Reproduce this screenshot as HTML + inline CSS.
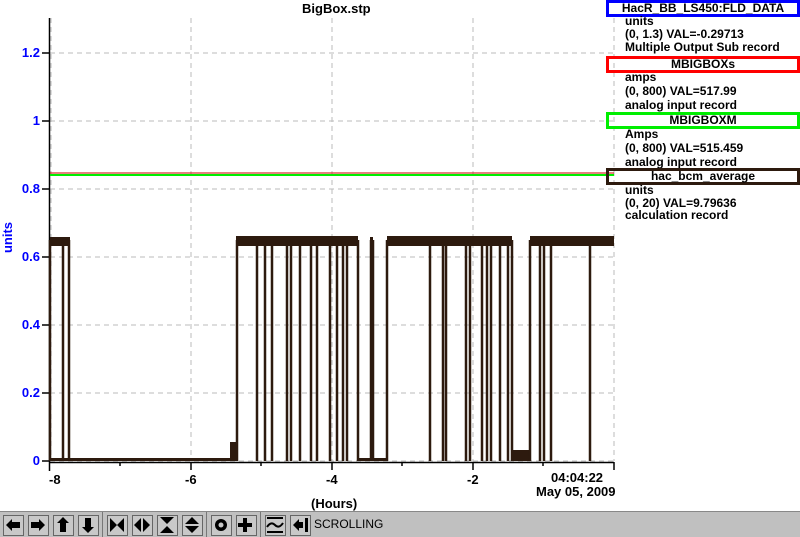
<!DOCTYPE html>
<html><head><meta charset="utf-8"><style>
body{margin:0;width:800px;height:536px;background:#fff;overflow:hidden;position:relative;font-family:"Liberation Sans",sans-serif;font-weight:bold;font-size:13px;color:#000}
.t{position:absolute;white-space:nowrap}
.yl{position:absolute;right:760px;color:#00f;font-size:13px;white-space:nowrap}
.lg{position:absolute;left:606px;width:188px;height:11px;border:3px solid;text-align:center;font-size:12px;line-height:11px}
.li{position:absolute;left:625px;font-size:12px;line-height:14px;white-space:nowrap}
.tb{position:absolute;left:0;top:511px;width:800px;height:25px;background:#c0c0c0;border-top:1px solid #888}
.b{position:absolute;top:3px;width:19px;height:19px;border:1px solid #666;background:#c8c8c8}
.sep{position:absolute;top:0;width:1px;height:25px;background:#777}
</style></head><body>
<svg width="800" height="536" style="position:absolute;left:0;top:0">
<g stroke="#bbb" stroke-width="1" stroke-dasharray="5,4">
<line x1="50" y1="53" x2="614" y2="53"/><line x1="50" y1="121" x2="614" y2="121"/><line x1="50" y1="189" x2="614" y2="189"/><line x1="50" y1="257" x2="614" y2="257"/><line x1="50" y1="325" x2="614" y2="325"/><line x1="50" y1="393" x2="614" y2="393"/><line x1="50" y1="461" x2="614" y2="461"/>
<line x1="191" y1="18" x2="191" y2="461"/><line x1="332" y1="18" x2="332" y2="461"/><line x1="473" y1="18" x2="473" y2="461"/><line x1="614" y1="18" x2="614" y2="461"/><line x1="51" y1="18" x2="51" y2="461"/>
</g>
<g stroke="#000" stroke-width="1.5">
<line x1="49.5" y1="18" x2="49.5" y2="471"/><line x1="49" y1="462.5" x2="614" y2="462.5"/>
<line x1="42" y1="53" x2="49" y2="53"/><line x1="42" y1="121" x2="49" y2="121"/><line x1="42" y1="189" x2="49" y2="189"/><line x1="42" y1="257" x2="49" y2="257"/><line x1="42" y1="325" x2="49" y2="325"/><line x1="42" y1="393" x2="49" y2="393"/><line x1="42" y1="461" x2="49" y2="461"/>
<line x1="191" y1="462" x2="191" y2="470"/><line x1="332" y1="462" x2="332" y2="470"/><line x1="473" y1="462" x2="473" y2="470"/><line x1="614" y1="462" x2="614" y2="470"/>
<line x1="120" y1="462" x2="120" y2="466"/><line x1="261" y1="462" x2="261" y2="466"/><line x1="402" y1="462" x2="402" y2="466"/><line x1="543" y1="462" x2="543" y2="466"/>
</g>
<line x1="50" y1="173" x2="614" y2="173" stroke="#c00" stroke-width="1"/>
<line x1="50" y1="175" x2="614" y2="175" stroke="#0e0" stroke-width="2"/>
<g fill="#2d1a0e">
<rect x="50" y="237" width="20" height="9"/>
<rect x="236" y="236" width="122" height="10"/>
<rect x="370" y="237" width="3" height="9"/>
<rect x="387" y="236" width="125" height="10"/>
<rect x="530" y="236" width="84" height="10"/>
<rect x="50" y="458" width="186" height="3"/>
<rect x="358" y="458" width="14" height="3"/>
<rect x="372" y="458" width="16" height="3"/>
<rect x="512" y="450" width="18" height="11"/>
<rect x="230" y="442" width="6" height="19"/>
</g>
<g stroke="#2d1a0e" stroke-width="2.5">
<line x1="50" y1="240" x2="50" y2="461"/><line x1="63" y1="240" x2="63" y2="461"/><line x1="69" y1="240" x2="69" y2="461"/><line x1="237" y1="240" x2="237" y2="461"/>
<line x1="257" y1="240" x2="257" y2="461"/><line x1="265" y1="240" x2="265" y2="461"/><line x1="272" y1="240" x2="272" y2="461"/><line x1="287" y1="240" x2="287" y2="461"/><line x1="291" y1="240" x2="291" y2="461"/><line x1="300" y1="240" x2="300" y2="461"/><line x1="311" y1="240" x2="311" y2="461"/><line x1="317" y1="240" x2="317" y2="461"/><line x1="330" y1="240" x2="330" y2="461"/><line x1="337" y1="240" x2="337" y2="461"/><line x1="343" y1="240" x2="343" y2="461"/><line x1="347" y1="240" x2="347" y2="461"/><line x1="358" y1="240" x2="358" y2="461"/><line x1="371" y1="240" x2="371" y2="461"/><line x1="373" y1="240" x2="373" y2="461"/><line x1="387" y1="240" x2="387" y2="461"/>
<line x1="430" y1="240" x2="430" y2="461"/><line x1="443" y1="240" x2="443" y2="461"/><line x1="446" y1="240" x2="446" y2="461"/><line x1="466" y1="240" x2="466" y2="461"/><line x1="470" y1="240" x2="470" y2="461"/><line x1="482" y1="240" x2="482" y2="461"/><line x1="487" y1="240" x2="487" y2="461"/><line x1="491" y1="240" x2="491" y2="461"/><line x1="500" y1="240" x2="500" y2="461"/><line x1="508" y1="240" x2="508" y2="461"/><line x1="512" y1="240" x2="512" y2="461"/><line x1="530" y1="240" x2="530" y2="461"/><line x1="540" y1="240" x2="540" y2="461"/><line x1="544" y1="240" x2="544" y2="461"/><line x1="551" y1="240" x2="551" y2="461"/><line x1="590" y1="240" x2="590" y2="461"/>
</g>
</svg>
<div class="t" style="left:302px;top:1px;">BigBox.stp</div>
<div class="yl" style="top:45px;">1.2</div>
<div class="yl" style="top:113px;">1</div>
<div class="yl" style="top:181px;">0.8</div>
<div class="yl" style="top:249px;">0.6</div>
<div class="yl" style="top:317px;">0.4</div>
<div class="yl" style="top:385px;">0.2</div>
<div class="yl" style="top:453px;">0</div>
<div class="t" style="color:#00f;left:-8px;top:230px;transform:rotate(-90deg);transform-origin:center;">units</div>
<div class="t" style="left:49px;top:472px;">-8</div>
<div class="t" style="left:185px;top:472px;">-6</div>
<div class="t" style="left:326px;top:472px;">-4</div>
<div class="t" style="left:467px;top:472px;">-2</div>
<div class="t" style="left:551px;top:470px;">04:04:22</div>
<div class="t" style="left:536px;top:484px;">May 05, 2009</div>
<div class="t" style="left:311px;top:496px;">(Hours)</div>
<div class="lg" style="top:0;border-color:#00f">HacR_BB_LS450:FLD_DATA</div>
<div class="li" style="top:15px;line-height:13px">units<br>(0, 1.3) VAL=-0.29713<br>Multiple Output Sub record</div>
<div class="lg" style="top:56px;border-color:#f00">MBIGBOXs</div>
<div class="li" style="top:70px;">amps<br>(0, 800) VAL=517.99<br>analog input record</div>
<div class="lg" style="top:112px;border-color:#0e0">MBIGBOXM</div>
<div class="li" style="top:127px;">Amps<br>(0, 800) VAL=515.459<br>analog input record</div>
<div class="lg" style="top:168px;border-color:#2d1a0e">hac_bcm_average</div>
<div class="li" style="top:184px;line-height:12.5px">units<br>(0, 20) VAL=9.79636<br>calculation record</div>
<div class="tb">
<div class="b" style="left:3px"></div><div class="b" style="left:28px"></div><div class="b" style="left:53px"></div><div class="b" style="left:78px"></div>
<div class="sep" style="left:102px"></div>
<div class="b" style="left:107px"></div><div class="b" style="left:132px"></div><div class="b" style="left:157px"></div><div class="b" style="left:182px"></div>
<div class="sep" style="left:206px"></div>
<div class="b" style="left:211px"></div><div class="b" style="left:236px"></div>
<div class="sep" style="left:260px"></div>
<div class="b" style="left:265px"></div><div class="b" style="left:290px"></div>
<svg width="320" height="25" style="position:absolute;left:0;top:0" fill="#000">
<path d="M6 13 L12 7 L12 10 L20 10 L20 16 L12 16 L12 19Z"/>
<path d="M45 13 L39 7 L39 10 L31 10 L31 16 L39 16 L39 19Z"/>
<path d="M63 5 L69 11 L66 11 L66 20 L60 20 L60 11 L57 11Z"/>
<path d="M88 21 L94 15 L91 15 L91 6 L85 6 L85 15 L82 15Z"/>
<path d="M110 6 L117 13 L110 20Z M124 6 L117 13 L124 20Z"/>
<path d="M141 6 L134 13 L141 20Z M143 6 L150 13 L143 20Z"/>
<path d="M160 5 L174 5 L167 12Z M160 21 L174 21 L167 14Z"/>
<path d="M192 5 L199 12 L185 12Z M192 21 L199 14 L185 14Z"/>
<circle cx="221" cy="13" r="6"/><circle cx="221" cy="13" r="2.5" fill="#c8c8c8"/>
<path d="M243 6 h4 v5 h5 v4 h-5 v5 h-4 v-5 h-5 v-4 h5z"/>
<rect x="267" y="5" width="16" height="2"/><rect x="267" y="19" width="16" height="2"/>
<path d="M267 15 Q271 9 275 13 T283 11" stroke="#000" stroke-width="2" fill="none"/>
<path d="M293 13 L299 7 L299 19Z M299 10 h4 v6 h-4z M305 6 h3 v14 h-3z"/>
</svg>
<div class="t" style="left:314px;top:5px;font-weight:normal;font-size:12px;">SCROLLING</div>
</div>
</body></html>
